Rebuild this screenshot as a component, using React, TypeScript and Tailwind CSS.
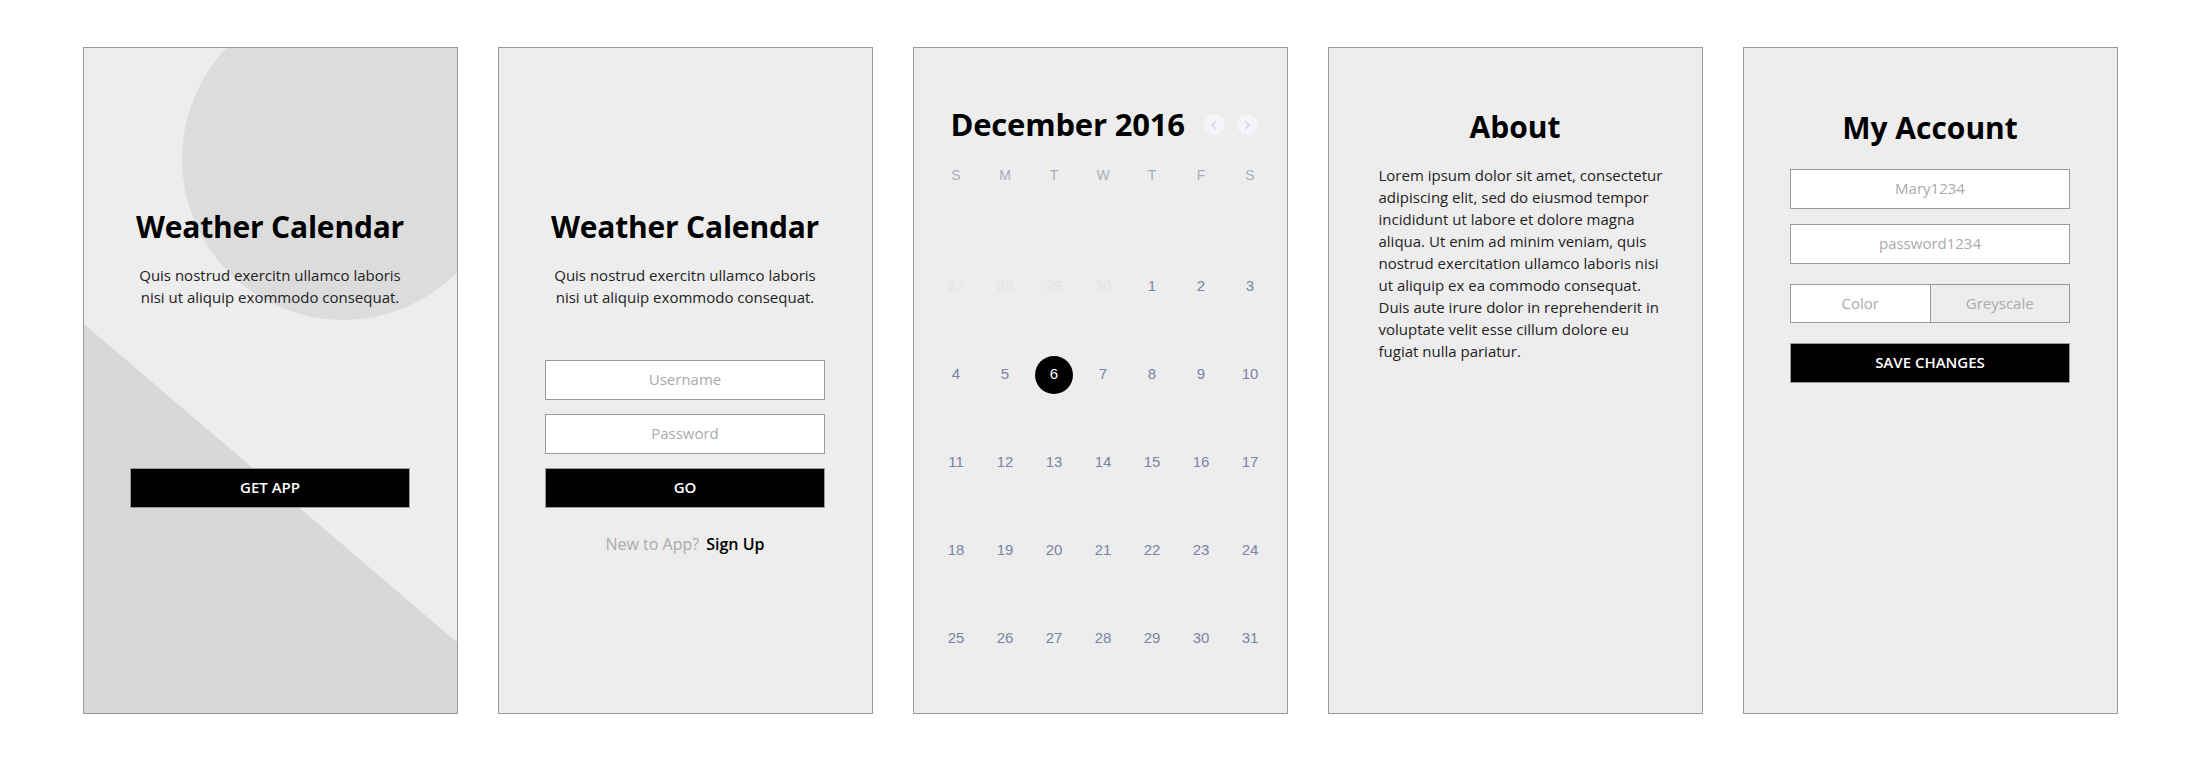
import React from 'react';

const sans = "font-['Open_Sans','Noto_Sans',sans-serif]";
const helv = "font-['Liberation_Sans','Arial',sans-serif]";

const Panel: React.FC<{ children: React.ReactNode; className?: string }> = ({ children, className }) => (
  <div className={`relative w-[375px] h-[667px] shrink-0 overflow-hidden border border-[#9a9a9a] bg-[#ededed] ${className ?? ''}`}>
    {children}
  </div>
);

const Intro = () => (
  <>
    <h1 className="mt-[161px] text-[30px] leading-[36px] font-bold text-black tracking-[-0.2px]">Weather Calendar</h1>
    <p className="mt-[19px] text-[15px] leading-[22.5px] text-[#222] text-center">
      Quis nostrud exercitn ullamco laboris
      <br />
      nisi ut aliquip exommodo consequat.
    </p>
  </>
);

const Field: React.FC<{ label: string; className?: string }> = ({ label, className }) => (
  <div className={`flex h-[40px] w-[280px] items-center justify-center border border-[#9a9a9a] bg-white text-[15px] text-[#aaa] ${className ?? ''}`}>
    {label}
  </div>
);

const BlackButton: React.FC<{ label: string; className?: string }> = ({ label, className }) => (
  <div className={`flex h-[40px] w-[280px] items-center justify-center border border-[#9a9a9a] bg-black text-[15px] font-semibold text-white ${className ?? ''}`}>
    {label}
  </div>
);

// first screen: splash with background shapes
const Splash = () => (
  <Panel>
    <svg className="absolute inset-0" width="375" height="667" viewBox="0 0 375 667">
      <circle cx="259" cy="111" r="161" fill="#dcdcdc" />
      <polygon points="0,276 375,596 375,667 0,667" fill="#d8d8d8" />
    </svg>
    <div className="relative flex flex-col items-center">
      <Intro />
      <BlackButton label="GET APP" className="mt-[159px] h-[39px]" />
    </div>
  </Panel>
);

const Login = () => (
  <Panel>
    <div className="flex flex-col items-center">
      <Intro />
      <Field label="Username" className="mt-[51px]" />
      <Field label="Password" className="mt-[14px]" />
      <BlackButton label="GO" className="mt-[14px] h-[39px]" />
      <div className="mt-[24px] flex gap-[7px] text-[16px] leading-[24px]">
        <span className="text-[#aaa]">New to App?</span>
        <span className="font-semibold text-black">Sign Up</span>
      </div>
    </div>
  </Panel>
);

const weekdays = ['S', 'M', 'T', 'W', 'T', 'F', 'S'];
const days: { n: number; muted?: boolean }[] = [
  { n: 27, muted: true },
  { n: 28, muted: true },
  { n: 29, muted: true },
  { n: 30, muted: true },
  ...Array.from({ length: 31 }, (_, i) => ({ n: i + 1 })),
];

const Chevron: React.FC<{ dir: 'l' | 'r' }> = ({ dir }) => (
  <div className="flex h-[21px] w-[21px] items-center justify-center rounded-full bg-[#f5f5f9]">
    <svg width="8" height="10" viewBox="0 0 8 10" fill="none" stroke="#cfd0da" strokeWidth="1.3">
      <path d={dir === 'l' ? 'M6 1 L2 5 L6 9' : 'M2 1 L6 5 L2 9'} />
    </svg>
  </div>
);

const Calendar = () => (
  <Panel>
    <div className="mt-[58px] ml-[37px] flex items-center">
      <h2 className="text-[31px] leading-[36px] font-bold text-black tracking-[-0.2px]">December 2016</h2>
      <div className="ml-[19px] mt-[2px] flex gap-[12px]">
        <Chevron dir="l" />
        <Chevron dir="r" />
      </div>
    </div>
    <div className={`ml-[18px] w-[343px] ${helv}`}>
      <div className="mt-[23px] grid grid-cols-7 text-[14px] leading-[20px] text-[#a9adb8]">
        {weekdays.map((d, i) => (
          <div key={i} className="text-center">
            {d}
          </div>
        ))}
      </div>
      <div className="mt-[58px] grid grid-cols-7 auto-rows-[88px] text-[15px]">
        {days.map((d, i) => (
          <div key={i} className="flex items-center justify-center">
            {d.n === 6 && !d.muted ? (
              <span className="flex h-[38px] w-[38px] items-center justify-center rounded-full bg-black text-white">6</span>
            ) : (
              <span className={d.muted ? 'text-[#e3e3e7]' : 'text-[#7a83a3]'}>{d.n}</span>
            )}
          </div>
        ))}
      </div>
    </div>
  </Panel>
);

const aboutLines = [
  'Lorem ipsum dolor sit amet, consectetur',
  'adipiscing elit, sed do eiusmod tempor',
  'incididunt ut labore et dolore magna',
  'aliqua. Ut enim ad minim veniam, quis',
  'nostrud exercitation ullamco laboris nisi',
  'ut aliquip ex ea commodo consequat.',
  'Duis aute irure dolor in reprehenderit in',
  'voluptate velit esse cillum dolore eu',
  'fugiat nulla pariatur.',
];

const About = () => (
  <Panel>
    <h2 className="mt-[61px] text-center text-[30px] leading-[36px] font-bold text-black">About</h2>
    <div className="ml-[50px] mt-[19px] text-[15px] leading-[22px] text-[#222]">
      {aboutLines.map((l) => (
        <div key={l} className="whitespace-nowrap">
          {l}
        </div>
      ))}
    </div>
  </Panel>
);

const Account = () => (
  <Panel>
    <div className="flex flex-col items-center">
      <h2 className="mt-[62px] text-[30px] leading-[36px] font-bold text-black">My Account</h2>
      <Field label="Mary1234" className="mt-[23px] h-[39px]" />
      <Field label="password1234" className="mt-[15px] h-[39px]" />
      <div className="mt-[20px] flex h-[39px] w-[280px] border border-[#9a9a9a] text-[15px] text-[#aaa]">
        <div className="flex flex-1 items-center justify-center bg-white">Color</div>
        <div className="flex flex-1 items-center justify-center border-l border-[#9a9a9a] bg-[#ededed]">Greyscale</div>
      </div>
      <BlackButton label="SAVE CHANGES" className="mt-[20px] h-[39px]" />
    </div>
  </Panel>
);

export default function App() {
  return (
    <div className={`flex h-[760px] w-[2200px] items-center justify-center gap-[40px] bg-white ${sans}`}>
      <Splash />
      <Login />
      <Calendar />
      <About />
      <Account />
    </div>
  );
}
